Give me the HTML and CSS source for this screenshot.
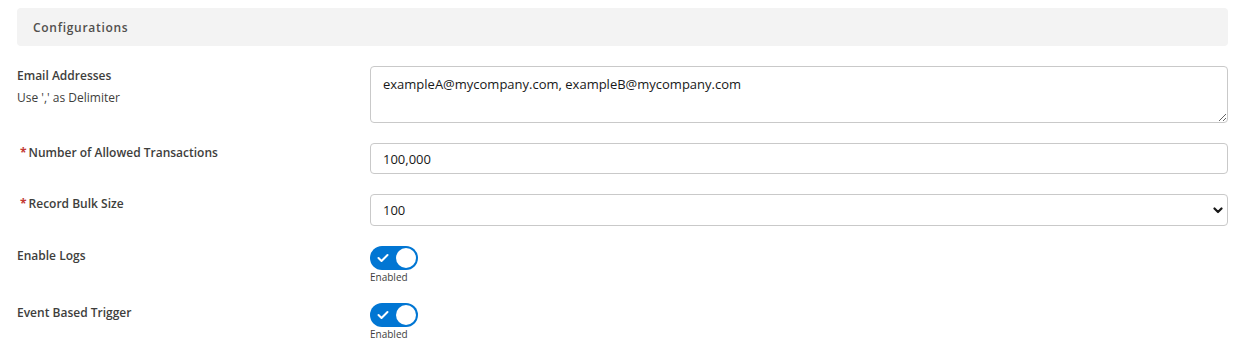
FILE: index.html
```html
<!DOCTYPE html>
<html lang="en">
<head>
    <meta charset="UTF-8">
    <meta name="viewport" content="width=device-width, initial-scale=1.0">
    <title>Configurations</title>
    <link rel="stylesheet" href="styles.css">
</head>
<body>
    <div class="panel">
        <h3 class="section-title">Configurations</h3>

        <div class="row">
            <div class="label">
                <span class="label-text">Email Addresses</span>
                <span class="help">Use ',' as Delimiter</span>
            </div>
            <div class="control">
                <textarea class="textarea">exampleA@mycompany.com, exampleB@mycompany.com</textarea>
            </div>
        </div>

        <div class="row">
            <div class="label">
                <span class="label-text"><abbr class="required">*</abbr>Number of Allowed Transactions</span>
            </div>
            <div class="control">
                <input class="input" type="text" value="100,000">
            </div>
        </div>

        <div class="row">
            <div class="label">
                <span class="label-text"><abbr class="required">*</abbr>Record Bulk Size</span>
            </div>
            <div class="control">
                <div class="select-wrap">
                    <select class="select">
                        <option>100</option>
                        <option>200</option>
                        <option>500</option>
                    </select>
                    <svg class="chevron" width="10" height="7" viewBox="0 0 10 7">
                        <path d="M1.5 1.5 L5 5 L8.5 1.5" fill="none" stroke="#181818" stroke-width="2.2" stroke-linecap="round" stroke-linejoin="round"/>
                    </svg>
                </div>
            </div>
        </div>

        <div class="row">
            <div class="label">
                <span class="label-text">Enable Logs</span>
            </div>
            <div class="control">
                <div class="toggle">
                    <span class="track">
                        <svg class="check" width="12" height="10" viewBox="0 0 12 10">
                            <path d="M1.5 5 L4.5 8 L10.5 2" fill="none" stroke="#fff" stroke-width="2" stroke-linecap="round" stroke-linejoin="round"/>
                        </svg>
                        <span class="knob"></span>
                    </span>
                    <span class="toggle-status">Enabled</span>
                </div>
            </div>
        </div>

        <div class="row">
            <div class="label">
                <span class="label-text">Event Based Trigger</span>
            </div>
            <div class="control">
                <div class="toggle">
                    <span class="track">
                        <svg class="check" width="12" height="10" viewBox="0 0 12 10">
                            <path d="M1.5 5 L4.5 8 L10.5 2" fill="none" stroke="#fff" stroke-width="2" stroke-linecap="round" stroke-linejoin="round"/>
                        </svg>
                        <span class="knob"></span>
                    </span>
                    <span class="toggle-status">Enabled</span>
                </div>
            </div>
        </div>
    </div>
</body>
</html>
```

FILE: styles.css
```css
body {
    margin: 0;
    padding: 8px 25px 0 17px;
    font-family: "Open Sans", Arial, sans-serif;
    color: #181818;
    background: #fff;
}

.section-title {
    margin: 0 0 20px 0;
    height: 38px;
    line-height: 38px;
    padding: 1px 16px 0;
    box-sizing: border-box;
    background-color: #f3f3f3;
    border-radius: 4px;
    font-size: 12px;
    font-weight: 600;
    letter-spacing: 0.7px;
    color: #514f4d;
}

.row {
    display: grid;
    grid-template-columns: 353px 1fr;
    margin-bottom: 20px;
}

.label {
    display: flex;
    flex-direction: column;
    padding-top: 1px;
}

.label-text {
    font-size: 12px;
    font-weight: 600;
    line-height: 18px;
    color: #3e3e3c;
}

.help {
    margin-top: 4px;
    font-size: 12px;
    line-height: 18px;
    color: #3e3e3c;
}

.required {
    color: #c23934;
    text-decoration: none;
    margin: 0 2px 0 3px;
    font-weight: 700;
}

.textarea,
.input,
.select {
    display: block;
    width: 100%;
    box-sizing: border-box;
    border: 1px solid #c9c9c9;
    border-radius: 4px;
    font-family: "Open Sans", Arial, sans-serif;
    font-size: 13px;
    color: #181818;
    background: #fff;
    outline: none;
}

.textarea {
    height: 57px;
    padding: 8px 12px;
    line-height: 19px;
    resize: vertical;
}

.input {
    height: 31px;
    padding: 0 12px;
}

.select-wrap {
    position: relative;
}

.select {
    height: 32px;
    padding: 0 12px;
    appearance: none;
    -webkit-appearance: none;
}

.chevron {
    position: absolute;
    right: 5px;
    top: 13px;
    pointer-events: none;
}

.toggle {
    display: flex;
    flex-direction: column;
    align-items: flex-start;
}

.track {
    position: relative;
    display: flex;
    align-items: center;
    width: 48px;
    height: 24px;
    border-radius: 12px;
    background-color: #0176d3;
}

.check {
    margin-left: 7px;
}

.knob {
    position: absolute;
    right: 2px;
    top: 2px;
    width: 20px;
    height: 20px;
    border-radius: 50%;
    background-color: #fff;
}

.toggle-status {
    margin-top: 1px;
    font-size: 10px;
    line-height: 12px;
    color: #3e3e3c;
}
```
